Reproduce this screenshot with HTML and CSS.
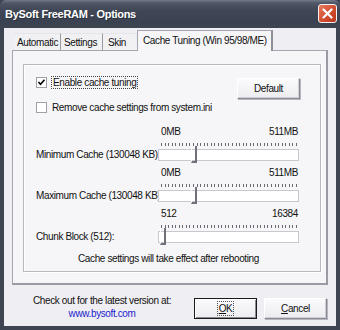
FILE: index.html
```html
<!DOCTYPE html>
<html>
<head>
<meta charset="utf-8">
<link rel="stylesheet" href="styles.css">
</head>
<body>
<div class="window">
  <div class="titlebar">
    <span class="title">BySoft FreeRAM - Options</span>
    <span class="close"><svg width="11" height="11" viewBox="0 0 11 11"><path d="M1.5 1.5 L9.5 9.5 M9.5 1.5 L1.5 9.5" stroke="#fff" stroke-width="2.2" stroke-linecap="round"/></svg></span>
  </div>
  <div class="client">
    <div class="tabs">
      <div class="tab t1">Automatic</div>
      <div class="tab t2">Settings</div>
      <div class="tab t3">Skin</div>
      <div class="tab active">Cache Tuning (Win 95/98/ME)</div>
    </div>
    <div class="panel">
      <div class="group">
        <div class="toprow">
          <div class="checks">
            <label class="check"><span class="box"><svg width="9" height="9" viewBox="0 0 9 9"><path d="M1.5 4 L3.5 6.2 L7.5 1.8" fill="none" stroke="#000" stroke-width="1.6"/></svg></span><span class="focus">Enable cache tuning</span></label>
            <label class="check second"><span class="box"></span><span>Remove cache settings from system.ini</span></label>
          </div>
          <div class="btn default-btn">Default</div>
        </div>
        <div class="slider-row first">
          <div class="slabel">Minimum Cache (130048 KB):</div>
          <div class="slider">
            <div class="scale"><span>0MB</span><span>511MB</span></div>
            <div class="ticks"></div>
            <div class="track"><span class="thumb thumb-a"></span></div>
          </div>
        </div>
        <div class="slider-row">
          <div class="slabel">Maximum Cache (130048 KB):</div>
          <div class="slider">
            <div class="scale"><span>0MB</span><span>511MB</span></div>
            <div class="ticks"></div>
            <div class="track"><span class="thumb thumb-a"></span></div>
          </div>
        </div>
        <div class="slider-row">
          <div class="slabel">Chunk Block (512):</div>
          <div class="slider">
            <div class="scale"><span>512</span><span>16384</span></div>
            <div class="ticks"></div>
            <div class="track"><span class="thumb thumb-b"></span></div>
          </div>
        </div>
        <div class="note">Cache settings will take effect after rebooting</div>
      </div>
    </div>
    <div class="footer">
      <div class="info">
        <div>Check out for the latest version at:</div>
        <div class="link">www.bysoft.com</div>
      </div>
      <div class="buttons">
        <div class="btn ok-btn"><span class="inner"><u>O</u>K</span></div>
        <div class="btn"><span><u>C</u>ancel</span></div>
      </div>
    </div>
  </div>
</div>
</body>
</html>
```
FILE: styles.css
```css
html, body {
  margin: 0;
  padding: 0;
  background: #ffffff;
}
.window {
  width: 340px;
  height: 330px;
  display: flex;
  flex-direction: column;
  background: #3e4452;
  font-family: "Liberation Sans", Arial, sans-serif;
  font-size: 10px;
  letter-spacing: -0.38px;
  color: #111;
  box-sizing: border-box;
}
.titlebar {
  height: 28px;
  flex: none;
  display: flex;
  align-items: center;
  justify-content: space-between;
  padding: 0 3px 0 5px;
  background: linear-gradient(#737a89 0px, #4f5666 3px, #404757 10px, #3a4150 22px, #3e4452 28px);
  border-radius: 6px 6px 0 0;
}
.title {
  color: #fff;
  font-family: "Liberation Sans", Arial, sans-serif;
  font-weight: bold;
  font-size: 11px;
  letter-spacing: -0.3px;
  text-shadow: 1px 1px 0 #2a2f3a;
}
.close {
  width: 17px;
  height: 17px;
  border: 1px solid #f4f4f4;
  border-radius: 3px;
  background: linear-gradient(135deg, #e8795c, #d04a2c 60%, #b8381e);
  display: flex;
  align-items: center;
  justify-content: center;
  margin-bottom: 2px;
}
.client {
  flex: 1;
  margin: 0 4px 4px 4px;
  background: #efeef2;
  display: flex;
  flex-direction: column;
  padding: 2px 0 0 0;
}
.tabs {
  display: flex;
  align-items: flex-end;
  padding-left: 10px;
  height: 20px;
  position: relative;
  z-index: 1;
}
.tab {
  height: 17px;
  box-sizing: border-box;
  padding: 3px 0 0 3px;
  border-right: 1px solid #9a9aa2;
  border-top: 1px solid #e4e4ea;
  background: #f1f1f4;
  white-space: nowrap;
}
.t1 { width: 47px; }
.t2 { width: 42px; }
.t3 { width: 33px; border-right: none; padding-left: 5px; }
.tab.active {
  width: 136px;
  height: 21px;
  margin-left: 1px;
  margin-bottom: -1px;
  padding: 4px 0 0 5px;
  background: #f6f6f8;
  border: 1px solid #a6a6ae;
  border-bottom: none;
  border-right: 2px solid #8e8e96;
}
.panel {
  margin: 0 8px 0 8px;
  height: 235px;
  box-sizing: border-box;
  border: 1px solid #a6a6ae;
  border-right: 2px solid #9a9aa2;
  border-bottom: 2px solid #9a9aa2;
  background: #f6f6f8;
  padding: 13px 5px 0 10px;
}
.group {
  height: 208px;
  box-sizing: border-box;
  border: 1px solid #b8b8c0;
  box-shadow: inset 1px 1px 0 #ffffff, 1px 1px 0 #ffffff;
  padding: 0 0 0 12px;
  display: flex;
  flex-direction: column;
}
.toprow {
  display: flex;
  justify-content: space-between;
  padding-right: 20px;
}
.checks {
  display: flex;
  flex-direction: column;
  padding-top: 10px;
  gap: 11px;
}
.check {
  display: flex;
  align-items: center;
  gap: 5px;
  height: 14px;
}
.box {
  width: 9px;
  height: 9px;
  border: 1px solid #a0a0a8;
  background: #fff;
  display: flex;
  align-items: center;
  justify-content: center;
}
.focus {
  outline: 1px dotted #444;
  outline-offset: 0px;
  padding: 0 1px;
}
.btn {
  width: 63px;
  height: 21px;
  box-sizing: border-box;
  display: flex;
  align-items: center;
  justify-content: center;
  background: linear-gradient(#fbfbfc, #ececf0);
  border: 1px solid;
  border-color: #ffffff #8a8a92 #8a8a92 #ffffff;
  box-shadow: 1px 1px 0 #b6b6be, inset -1px -1px 0 #cfcfd6;
}
.default-btn {
  margin-top: 13px;
}
.slider-row {
  display: flex;
  align-items: flex-end;
  margin-top: 6px;
}
.slider-row.first {
  margin-top: 12px;
}
.slabel {
  width: 122px;
  line-height: 12px;
  white-space: nowrap;
}
.slider {
  width: 141px;
  display: flex;
  flex-direction: column;
}
.scale {
  display: flex;
  justify-content: space-between;
  padding: 0 1px 0 3px;
  line-height: 12px;
}
.ticks {
  height: 3px;
  margin: 5px 1px 3px 3px;
  background: repeating-linear-gradient(90deg, #6a6a72 0 1px, transparent 1px 3.55px);
}
.track {
  height: 12px;
  box-sizing: border-box;
  background: #fff;
  border: 1px solid #c8c8d0;
  position: relative;
}
.thumb {
  position: absolute;
  top: -4px;
  width: 6px;
  height: 17px;
  box-sizing: border-box;
  border-left: 1px solid #fff;
  border-right: 2px solid #707078;
  border-bottom: 2px solid #707078;
  background: transparent;
}
.thumb-a {
  left: 32px;
}
.thumb-b {
  left: 1px;
}
.note {
  margin-top: 10px;
  margin-left: 42px;
}
.footer {
  flex: 1;
  display: flex;
  align-items: center;
  padding: 3px 9px 0 29px;
  justify-content: space-between;
}
.info {
  display: flex;
  flex-direction: column;
  align-items: center;
  line-height: 13px;
}
.link {
  color: #1c1ccf;
}
.buttons {
  display: flex;
  gap: 7px;
  padding-top: 2px;
}
.ok-btn {
  border: 1px solid #1a1a1a;
  box-shadow: inset 1px 1px 0 #fff, inset -1px -1px 0 #8a8a92;
}
.ok-btn .inner {
  outline: 1px dotted #555;
  outline-offset: 1px;
}
```
